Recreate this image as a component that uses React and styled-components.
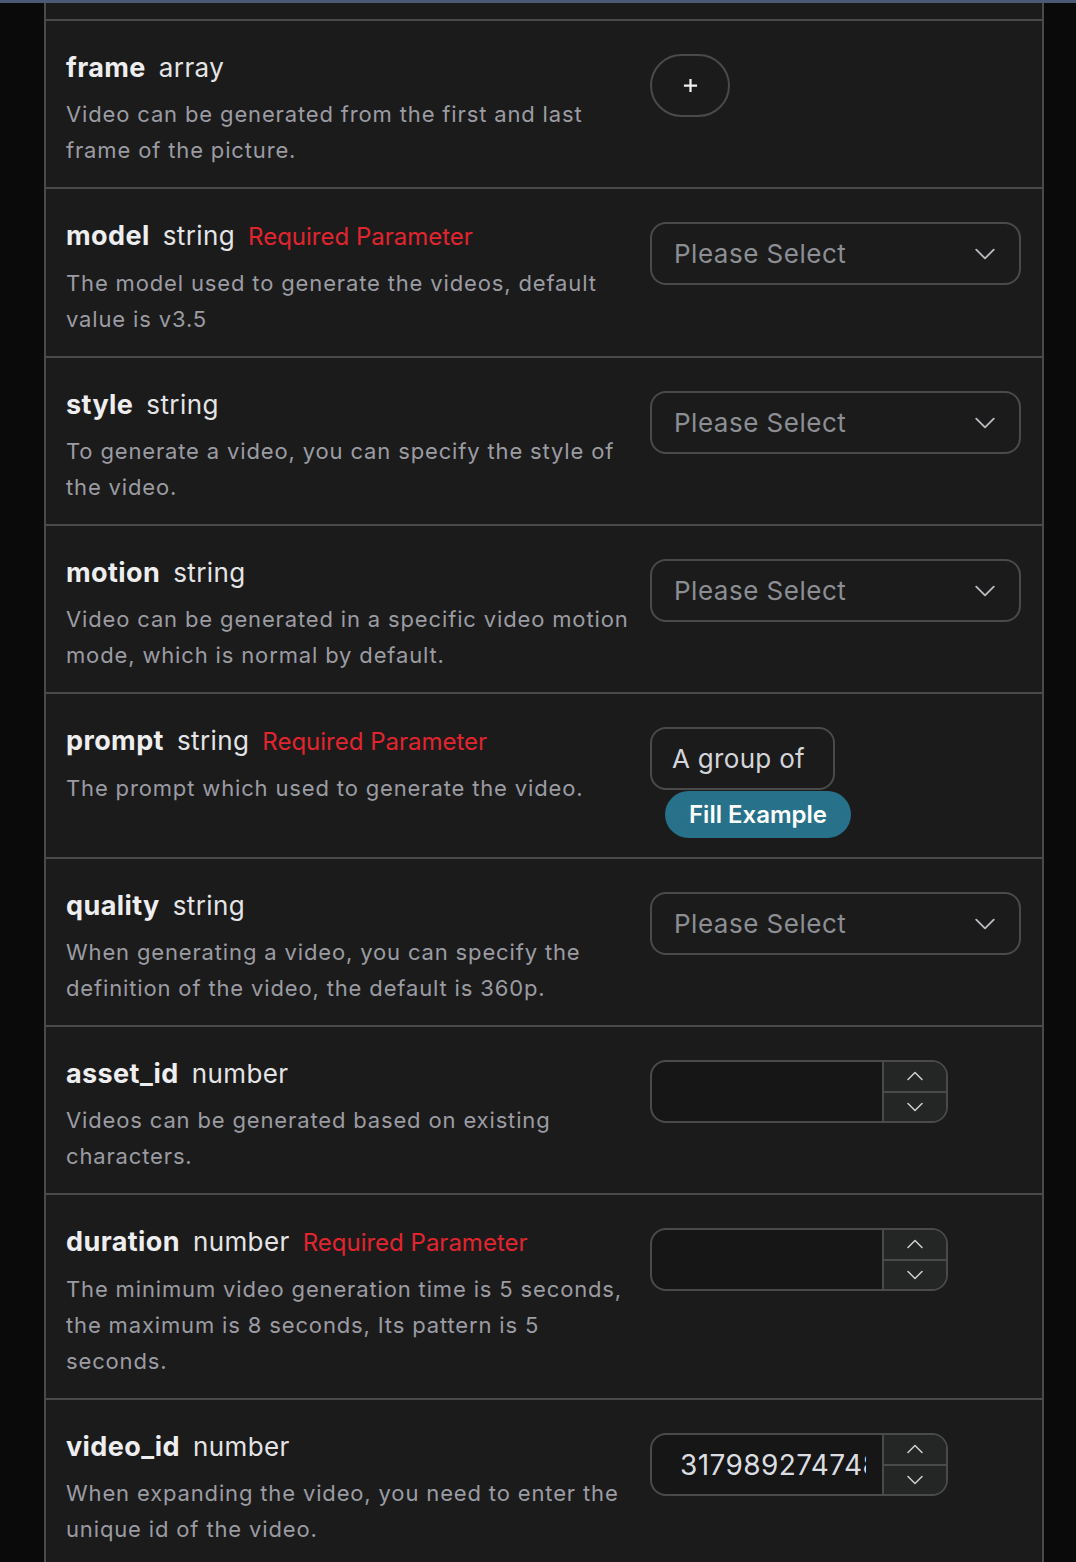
import React from 'react';
import styled, { createGlobalStyle } from 'styled-components';

const GlobalStyle = createGlobalStyle`
  body {
    margin: 0;
    background: #0a0a0a;
    font-family: Inter, "Noto Sans", sans-serif;
    -webkit-font-smoothing: antialiased;
  }
`;

const Page = styled.div`
  min-height: 100vh;
  display: flex;
  flex-direction: column;
`;

const TopStrip = styled.div`
  height: 3px;
  background: #4b5977;
`;

const Panel = styled.div`
  flex: 1;
  margin: 0 32px 0 44px;
  background: #1b1b1b;
  border-left: 2px solid #4a4a4a;
  border-right: 2px solid #4a4a4a;
  padding-top: 16px;
`;

const Row = styled.div`
  display: grid;
  grid-template-columns: 572px 1fr;
  column-gap: 12px;
  padding: 29px 20px 19px 20px;
  border-top: 2px solid #4a4a4a;
`;

const Info = styled.div`
  display: flex;
  flex-direction: column;
  gap: 10px;
`;

const Title = styled.div`
  display: flex;
  align-items: baseline;
  gap: 13px;
  line-height: 36px;
  white-space: nowrap;
`;

const Name = styled.span`
  font-size: 27px;
  font-weight: 700;
  letter-spacing: 0.4px;
  color: #eeeef0;
`;

const Type = styled.span`
  font-size: 26px;
  font-weight: 400;
  letter-spacing: 0.4px;
  color: #e4e4e6;
`;

const Required = styled.span`
  font-size: 24px;
  color: #e1252f;
`;

const Desc = styled.div`
  font-size: 22px;
  line-height: 36px;
  letter-spacing: 0.85px;
  color: #9b9ca3;
`;

const Control = styled.div`
  padding-top: 4px;
  display: flex;
  flex-direction: column;
  align-items: flex-start;
`;

const PlusButton = styled.button`
  width: 80px;
  height: 63px;
  border-radius: 32px;
  border: 2px solid #4a4a4a;
  background: transparent;
  display: flex;
  align-items: center;
  justify-content: center;
  padding: 0;
`;

const Select = styled.div`
  box-sizing: border-box;
  width: 371px;
  height: 63px;
  border: 2px solid #4a4a4a;
  border-radius: 16px;
  display: flex;
  align-items: center;
  justify-content: space-between;
  padding: 0 24px 0 22px;
  font-size: 26px;
  letter-spacing: 0.5px;
  color: #8c8e94;
`;

const TextBox = styled.div`
  box-sizing: border-box;
  height: 63px;
  border: 2px solid #4a4a4a;
  border-radius: 16px;
  display: flex;
  align-items: center;
  padding: 0 28px 0 20px;
  font-size: 26px;
  letter-spacing: 0.3px;
  color: #d3d5da;
`;

const FillButton = styled.button`
  margin: 1px 0 0 15px;
  height: 47px;
  padding: 0 24px;
  border: none;
  border-radius: 24px;
  background: #27718a;
  color: #ffffff;
  font-family: inherit;
  font-size: 24px;
  font-weight: 600;
`;

const NumberBox = styled.div`
  box-sizing: border-box;
  width: 298px;
  height: 63px;
  border: 2px solid #4a4a4a;
  border-radius: 16px;
  display: flex;
  overflow: hidden;
  background: #161616;
`;

const NumberValue = styled.div`
  flex: 1;
  min-width: 0;
  margin: 0 16px 0 28px;
  overflow: hidden;
  white-space: nowrap;
  display: flex;
  align-items: center;
  font-size: 28px;
  letter-spacing: 0.4px;
  color: #dcdde1;
`;

const Stepper = styled.div`
  width: 62px;
  border-left: 2px solid #4a4a4a;
  display: flex;
  flex-direction: column;
  background: #242525;
`;

const Step = styled.div`
  flex: 1;
  display: flex;
  align-items: center;
  justify-content: center;
  & + & {
    border-top: 2px solid #4a4a4a;
  }
`;

const Chevron = ({ up, width = 16, color = '#cfd0d4' }) => (
  <svg width={width} height={width / 2 + 2} viewBox="0 0 16 9" fill="none">
    <path
      d={up ? 'M1 8 L8 1 L15 8' : 'M1 1 L8 8 L15 1'}
      stroke={color}
      strokeWidth="1.5"
      strokeLinecap="round"
      strokeLinejoin="round"
    />
  </svg>
);

const Plus = () => (
  <svg width="15" height="15" viewBox="0 0 16 16">
    <path d="M8 1 V15 M1 8 H15" stroke="#f0f0f2" strokeWidth="2.4" />
  </svg>
);

const params = [
  { name: 'frame', type: 'array', desc: 'Video can be generated from the first and last frame of the picture.', control: 'plus' },
  { name: 'model', type: 'string', required: true, desc: 'The model used to generate the videos, default value is v3.5', control: 'select' },
  { name: 'style', type: 'string', desc: 'To generate a video, you can specify the style of the video.', control: 'select' },
  { name: 'motion', type: 'string', desc: 'Video can be generated in a specific video motion mode, which is normal by default.', control: 'select' },
  { name: 'prompt', type: 'string', required: true, desc: 'The prompt which used to generate the video.', control: 'text', value: 'A group of' },
  { name: 'quality', type: 'string', desc: 'When generating a video, you can specify the definition of the video, the default is 360p.', control: 'select' },
  { name: 'asset_id', type: 'number', desc: 'Videos can be generated based on existing characters.', control: 'number' },
  { name: 'duration', type: 'number', required: true, desc: 'The minimum video generation time is 5 seconds, the maximum is 8 seconds, Its pattern is 5 seconds.', control: 'number' },
  { name: 'video_id', type: 'number', desc: 'When expanding the video, you need to enter the unique id of the video.', control: 'number', value: '317989274748921' },
];

function ParamControl({ param }) {
  switch (param.control) {
    case 'plus':
      return <PlusButton><Plus /></PlusButton>;
    case 'select':
      return (
        <Select>
          Please Select
          <Chevron width={20} color="#b9bbc0" />
        </Select>
      );
    case 'text':
      return (
        <>
          <TextBox>{param.value}</TextBox>
          <FillButton>Fill Example</FillButton>
        </>
      );
    case 'number':
      return (
        <NumberBox>
          <NumberValue>{param.value}</NumberValue>
          <Stepper>
            <Step><Chevron up width={16} /></Step>
            <Step><Chevron width={16} /></Step>
          </Stepper>
        </NumberBox>
      );
    default:
      return null;
  }
}

export default function App() {
  return (
    <Page>
      <GlobalStyle />
      <TopStrip />
      <Panel>
        {params.map((p) => (
          <Row key={p.name}>
            <Info>
              <Title>
                <Name>{p.name}</Name>
                <Type>{p.type}</Type>
                {p.required && <Required>Required Parameter</Required>}
              </Title>
              <Desc>{p.desc}</Desc>
            </Info>
            <Control>
              <ParamControl param={p} />
            </Control>
          </Row>
        ))}
      </Panel>
    </Page>
  );
}
